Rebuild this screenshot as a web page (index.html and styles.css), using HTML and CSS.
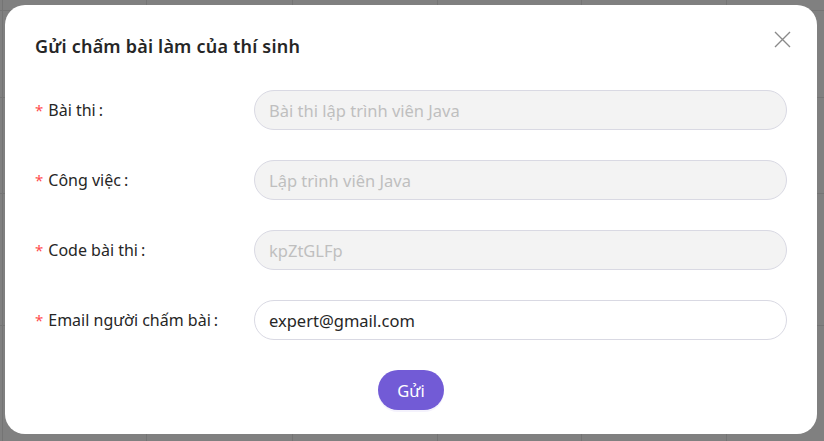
FILE: index.html
```html
<!DOCTYPE html>
<html lang="vi">
<head>
<meta charset="utf-8">
<title>Gửi chấm bài làm của thí sinh</title>
<link rel="stylesheet" href="styles.css">
</head>
<body>
<div class="backdrop"></div>
<div class="modal" role="dialog">
  <button class="close" aria-label="Đóng">
    <svg width="17" height="17" viewBox="0 0 17 17"><path d="M1 1 L16 16 M16 1 L1 16" stroke="#8a8a8a" stroke-width="1.4" fill="none"/></svg>
  </button>
  <h2 class="title">Gửi chấm bài làm của thí sinh</h2>
  <form class="form">
    <div class="row">
      <label class="label"><span class="req">*</span>Bài thi<span class="colon">:</span></label>
      <input class="input" disabled value="Bài thi lập trình viên Java">
    </div>
    <div class="row">
      <label class="label"><span class="req">*</span>Công việc<span class="colon">:</span></label>
      <input class="input" disabled value="Lập trình viên Java">
    </div>
    <div class="row">
      <label class="label"><span class="req">*</span>Code bài thi<span class="colon">:</span></label>
      <input class="input" disabled value="kpZtGLFp">
    </div>
    <div class="row">
      <label class="label"><span class="req">*</span>Email người chấm bài<span class="colon">:</span></label>
      <input class="input" value="expert@gmail.com">
    </div>
    <div class="actions">
      <button type="button" class="submit">Gửi</button>
    </div>
  </form>
</div>
</body>
</html>
```
FILE: styles.css
```css
* { box-sizing: border-box; }
html, body { margin: 0; height: 100%; }
body {
  font-family: "Noto Sans", "Open Sans", sans-serif;
  background-color: #808080;
  overflow: hidden;
}
.backdrop {
  width: 100%;
  height: 100%;
  background:
    linear-gradient(#747474, #747474) 2px 0 / 1px 100% no-repeat,
    linear-gradient(#747474, #747474) 146px 0 / 1px 100% no-repeat,
    linear-gradient(#747474, #747474) 292px 0 / 1px 100% no-repeat,
    linear-gradient(#747474, #747474) 437px 0 / 1px 100% no-repeat,
    linear-gradient(#747474, #747474) 581px 0 / 1px 100% no-repeat,
    linear-gradient(#747474, #747474) 726px 0 / 1px 100% no-repeat,
    linear-gradient(#747474, #747474) 0 10px / 100% 1px no-repeat,
    linear-gradient(#747474, #747474) 0 97px / 100% 1px no-repeat,
    linear-gradient(#747474, #747474) 0 193px / 100% 1px no-repeat,
    linear-gradient(#747474, #747474) 0 325px / 100% 1px no-repeat,
    #808080;
}
.modal {
  position: absolute;
  left: 5px;
  top: 5px;
  width: 812px;
  height: 429px;
  background: #fff;
  border-radius: 20px;
  padding: 29px 30px 0 30px;
}
.close {
  position: absolute;
  top: 26px;
  right: 26px;
  width: 17px;
  height: 17px;
  padding: 0;
  border: 0;
  background: none;
  display: flex;
}
.title {
  margin: 0;
  font-size: 18px;
  line-height: 24px;
  font-weight: 600;
  color: #262626;
  letter-spacing: 0.2px;
}
.form {
  margin-top: 32px;
  display: flex;
  flex-direction: column;
  gap: 30px;
}
.row {
  display: flex;
  align-items: center;
  height: 40px;
}
.label {
  width: 219px;
  flex: none;
  font-size: 16px;
  color: #262626;
  display: flex;
  align-items: center;
}
.req {
  color: #ff4d4f;
  margin-right: 5px;
  font-size: 15px;
}
.colon { margin-left: 3px; }
.input {
  flex: 1;
  height: 40px;
  border: 1px solid #d9d9e3;
  border-radius: 20px;
  padding: 0 14px;
  font-family: inherit;
  font-size: 16.5px;
  color: #262626;
  background: #fff;
  outline: none;
}
.input:disabled {
  background: #f3f3f3;
  color: #bfbfbf;
}
.actions {
  display: flex;
  justify-content: center;
}
.submit {
  height: 40px;
  padding: 0 19px;
  border: 0;
  border-radius: 20px;
  background: #725bd6;
  color: #fff;
  font-family: inherit;
  font-size: 16.5px;
  box-shadow: 0 2px 0 rgba(114, 91, 214, 0.08);
}
```
